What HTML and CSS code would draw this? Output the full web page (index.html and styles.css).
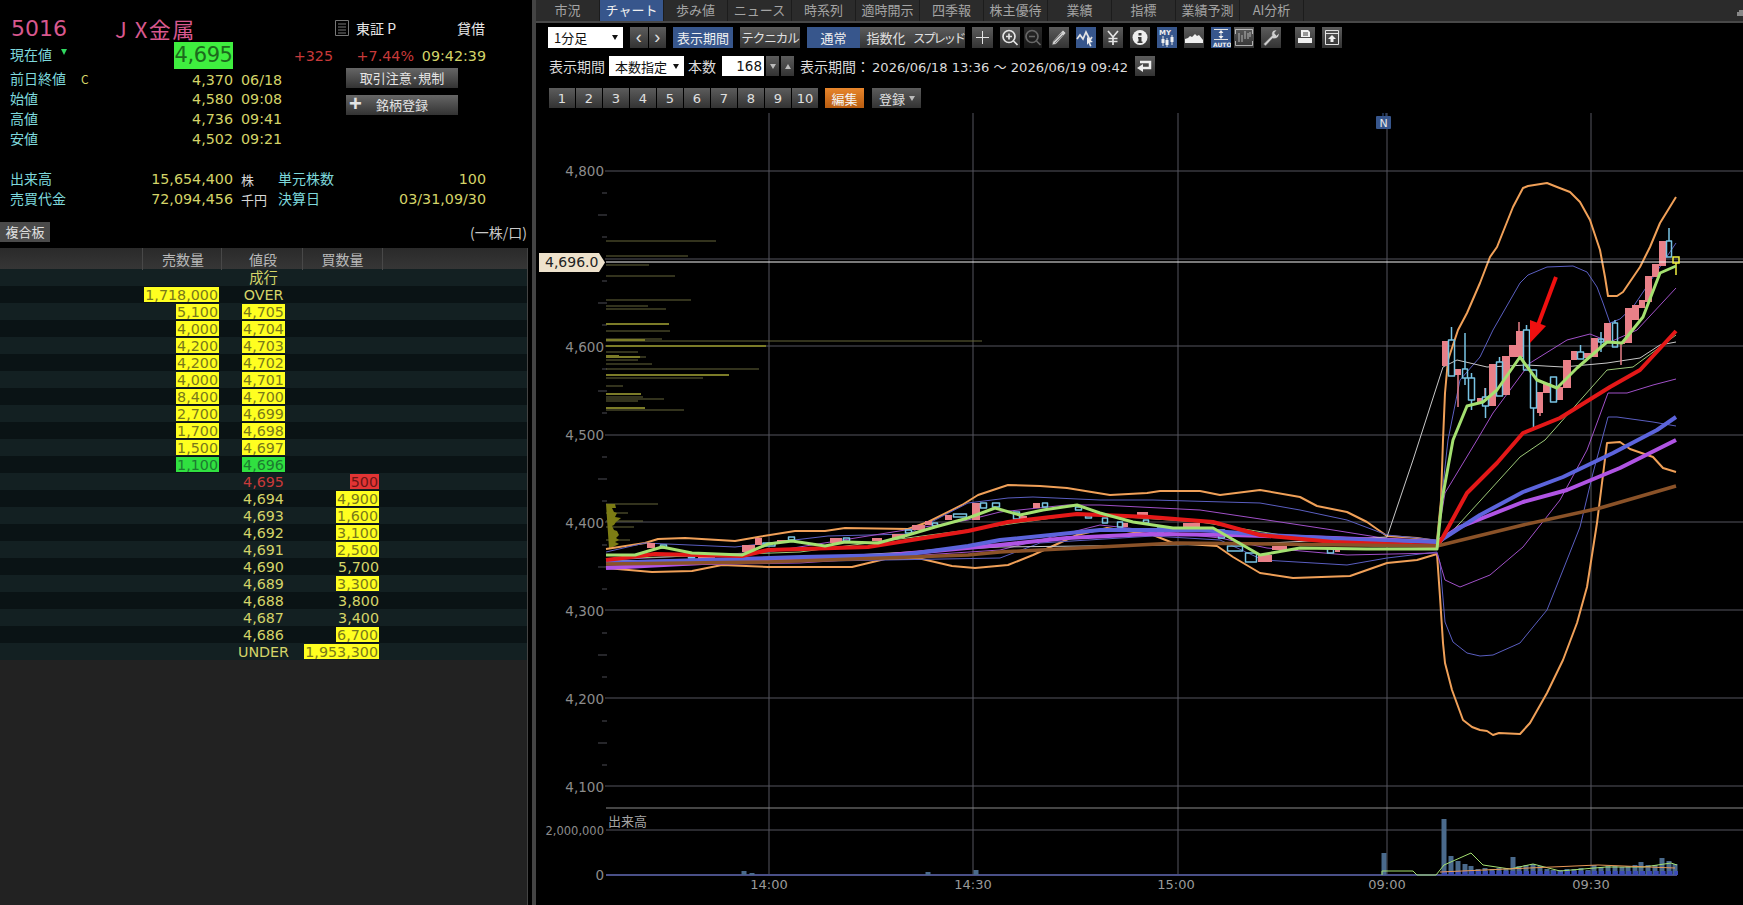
FILE: index.html
```html
<!DOCTYPE html>
<html lang="ja">
<head>
    <meta charset="UTF-8">
    <title>5016 JX金属 チャート</title>
    <link rel="stylesheet" href="styles.css">
</head>
<body>
<div class="left">
    <div class="title-row">
        <span class="code">5016</span>
        <span class="name">J X金属</span>
        <svg class="memo" viewBox="0 0 14 16"><path d="M.5.5h13v15H.5zM3 4h8M3 7h8M3 10h8M3 13h8"/></svg>
        <span class="market">東証 P</span>
        <span class="margin">貸借</span>
    </div>
    <div class="now-row">
        <span class="label">現在値<i class="tri"></i></span>
        <span class="num"><b class="now">4,695</b></span>
        <span class="num red">+325</span>
        <span class="num red">+7.44%</span>
        <span class="num">09:42:39</span>
    </div>
    <div class="stats">
        <div class="stat-list">
            <div class="stat-row"><span class="label">前日終値<em class="mark">C</em></span><span class="num">4,370</span><span class="val">06/18</span></div>
            <div class="stat-row"><span class="label">始値</span><span class="num">4,580</span><span class="val">09:08</span></div>
            <div class="stat-row"><span class="label">高値</span><span class="num">4,736</span><span class="val">09:41</span></div>
            <div class="stat-row"><span class="label">安値</span><span class="num">4,502</span><span class="val">09:21</span></div>
        </div>
        <div class="stat-btns">
            <div class="btn-wide">取引注意･規制</div>
            <div class="btn-wide btn-add"><span class="plus">+</span><span>銘柄登録</span></div>
        </div>
    </div>
    <div class="info-list">
        <div class="info-row"><span class="label">出来高</span><span class="num">15,654,400</span><span class="unit">株</span><span class="label">単元株数</span><span class="num">100</span></div>
        <div class="info-row"><span class="label">売買代金</span><span class="num">72,094,456</span><span class="unit">千円</span><span class="label">決算日</span><span class="num">03/31,09/30</span></div>
    </div>
    <div class="board-bar">
        <div class="board-btn">複合板</div>
        <span class="board-unit">(一株/口)</span>
    </div>
    <div class="board">
        <div class="cols head"><span></span><span>売数量</span><span>値段</span><span>買数量</span></div>
        <div class="cols r"><span></span><span></span><span class="p">成行</span><span></span></div>
        <div class="cols r"><span></span><span class="q"><b class="y">1,718,000</b></span><span class="p">OVER</span><span></span></div>
        <div class="cols r"><span></span><span class="q"><b class="y">5,100</b></span><span class="p"><b class="y">4,705</b></span><span></span></div>
        <div class="cols r"><span></span><span class="q"><b class="y">4,000</b></span><span class="p"><b class="y">4,704</b></span><span></span></div>
        <div class="cols r"><span></span><span class="q"><b class="y">4,200</b></span><span class="p"><b class="y">4,703</b></span><span></span></div>
        <div class="cols r"><span></span><span class="q"><b class="y">4,200</b></span><span class="p"><b class="y">4,702</b></span><span></span></div>
        <div class="cols r"><span></span><span class="q"><b class="y">4,000</b></span><span class="p"><b class="y">4,701</b></span><span></span></div>
        <div class="cols r"><span></span><span class="q"><b class="y">8,400</b></span><span class="p"><b class="y">4,700</b></span><span></span></div>
        <div class="cols r"><span></span><span class="q"><b class="y">2,700</b></span><span class="p"><b class="y">4,699</b></span><span></span></div>
        <div class="cols r"><span></span><span class="q"><b class="y">1,700</b></span><span class="p"><b class="y">4,698</b></span><span></span></div>
        <div class="cols r"><span></span><span class="q"><b class="y">1,500</b></span><span class="p"><b class="y">4,697</b></span><span></span></div>
        <div class="cols r"><span></span><span class="q"><b class="g">1,100</b></span><span class="p"><b class="g">4,696</b></span><span></span></div>
        <div class="cols r"><span></span><span></span><span class="p red">4,695</span><span class="q"><b class="rd">500</b></span></div>
        <div class="cols r"><span></span><span></span><span class="p">4,694</span><span class="q"><b class="y">4,900</b></span></div>
        <div class="cols r"><span></span><span></span><span class="p">4,693</span><span class="q"><b class="y">1,600</b></span></div>
        <div class="cols r"><span></span><span></span><span class="p">4,692</span><span class="q"><b class="y">3,100</b></span></div>
        <div class="cols r"><span></span><span></span><span class="p">4,691</span><span class="q"><b class="y">2,500</b></span></div>
        <div class="cols r"><span></span><span></span><span class="p">4,690</span><span class="q">5,700</span></div>
        <div class="cols r"><span></span><span></span><span class="p">4,689</span><span class="q"><b class="y">3,300</b></span></div>
        <div class="cols r"><span></span><span></span><span class="p">4,688</span><span class="q">3,800</span></div>
        <div class="cols r"><span></span><span></span><span class="p">4,687</span><span class="q">3,400</span></div>
        <div class="cols r"><span></span><span></span><span class="p">4,686</span><span class="q"><b class="y">6,700</b></span></div>
        <div class="cols r"><span></span><span></span><span class="p">UNDER</span><span class="q"><b class="y">1,953,300</b></span></div>
    </div>
</div>

<div class="divider"></div>

<div class="right">
    <div class="tabs">
        <span class="tab">市況</span>
        <span class="tab active">チャート</span>
        <span class="tab">歩み値</span>
        <span class="tab">ニュース</span>
        <span class="tab">時系列</span>
        <span class="tab">適時開示</span>
        <span class="tab">四季報</span>
        <span class="tab">株主優待</span>
        <span class="tab">業績</span>
        <span class="tab">指標</span>
        <span class="tab">業績予測</span>
        <span class="tab">AI分析</span>
        <svg class="corner" viewBox="0 0 6 6"><path d="M0 6V2h2V0h4v6z"/></svg>
    </div>

    <div class="tool-row">
        <div class="select sel-period">1分足<i class="down"></i></div>
        <div class="nav"><span class="btn">‹</span><span class="btn">›</span></div>
        <div class="btn blue w60">表示期間</div>
        <div class="btn w60 kana">テクニカル</div>
        <div class="seg"><span class="btn blue">通常</span><span class="btn">指数化</span><span class="btn kana-tight">スプレッド</span></div>
        <div class="icon wide"><svg viewBox="0 0 21 21"><path class="ln" d="M10.500 4v13M4 10.500h13"/></svg></div>
        <div class="zoom-pair">
            <div class="icon"><svg viewBox="0 0 20 21"><circle class="ln2" cx="9" cy="9.500" r="6"/><path class="ln2" d="M6 9.500h6M9 6.500v6M13.500 14l4 4"/></svg></div>
            <div class="icon off"><svg viewBox="0 0 18 21"><circle class="ln2" cx="8" cy="9.500" r="6"/><path class="ln2" d="M5 9.500h6M12.500 14l4 4"/></svg></div>
        </div>
        <div class="icon"><svg viewBox="0 0 20 21"><path class="solid" d="M14 3l3 3L7 17l-4 1 1-4zM12.500 6.500l-8 8M14 8l-8 8"/></svg></div>
        <div class="icon on"><svg viewBox="0 0 20 21"><path class="ln2" d="M1 12l3-4 3 4 3-7 4 8 2-3"/><path class="fill" d="M11 10l6 5-3 .5 1.500 3.500-1.500.5-1.500-3.500-1.500 2z"/></svg></div>
        <div class="icon"><svg viewBox="0 0 20 21"><path class="ln2" d="M5 4l5 6 5-6M10 10v8M5.500 11.500h9M5.500 14.500h9"/></svg></div>
        <div class="icon"><svg viewBox="0 0 20 21"><circle class="fill" cx="10" cy="10.500" r="7.500"/><path class="dark" d="M8.500 6h3v2.500h-3zM8 10h3.500v4.500H12.500V16h-5v-1.500h1v-3H8z"/></svg></div>
        <div class="icon on"><svg viewBox="0 0 20 21"><text class="my" x="2" y="8">MY</text><path class="ln" d="M6 9v10M10 11v9M15 8v10"/><path class="fill" d="M4.500 12h3v4h-3zM8.500 13h3v5h-3zM13.500 10h3v5h-3z"/></svg></div>
        <div class="icon"><svg viewBox="0 0 20 21"><path class="fill" d="M1 16v-4l3-1 2-2 2 1 3-3 2 2 2-1 4 5v3z"/></svg></div>
        <div class="icon on"><svg viewBox="0 0 20 21"><path class="ln" d="M3 2.500h14M3 12.500h14M10 4v7"/><path class="fill" d="M10 3l2.500 3h-5zM10 12l2.500-3h-5z"/><text class="auto" x="2" y="20">AUTO</text></svg></div>
        <div class="icon tight"><svg viewBox="0 0 20 21"><path class="thin" d="M1.500 7V2.500h17V7M1.500 14v4.500h17V14M5 6v9M8 8v7M11 4v8M14 6v6M16 5v5"/></svg></div>
        <div class="icon"><svg viewBox="0 0 20 21"><path class="solid" d="M2.500 17l8.500-8.500C10 5 12 2.500 16 3l-2.500 3 2 2.500L18 6c.5 4-2.500 6.500-6.500 5.500L4.500 19z"/></svg></div>
        <div class="icon after-gap"><svg viewBox="0 0 20 21"><path class="fill" d="M6 3h7l2 2v5H6zM3 11h14v5H3z"/><path class="dark" d="M8 5.500h5v1H8zM8 7.500h5v1H8z"/></svg></div>
        <div class="icon"><svg viewBox="0 0 20 21"><path class="ln" d="M3.500 3.500h13v14h-13zM3.500 6.500h13"/><path class="fill" d="M10 8l4 4h-2.500v3h-3v-3H6z"/></svg></div>
    </div>

    <div class="period-row">
        <span class="txt">表示期間</span>
        <div class="select sel-count">本数指定<i class="down"></i></div>
        <span class="txt">本数</span>
        <div class="count">
            <span class="count-val">168</span>
            <span class="btn arrow"><i class="down gray"></i></span>
            <span class="btn arrow"><i class="up"></i></span>
        </div>
        <span class="txt label-range">表示期間：</span>
        <span class="range">2026/06/18 13:36 ～ 2026/06/19 09:42</span>
        <div class="btn back"><svg viewBox="0 0 20 20"><path class="back-ln" d="M5 6h10v6H7"/><path class="fill" d="M8 8v8l-6-4z"/></svg></div>
    </div>

    <div class="num-row">
        <span class="btn n">1</span><span class="btn n">2</span><span class="btn n">3</span><span class="btn n">4</span><span class="btn n">5</span>
        <span class="btn n">6</span><span class="btn n">7</span><span class="btn n">8</span><span class="btn n">9</span><span class="btn n">10</span>
        <span class="btn edit">編集</span>
        <span class="btn reg">登録<i class="down gray"></i></span>
    </div>

    <svg class="chart" viewBox="536 113 1207 792">
        <!-- grid -->
        <path class="grid" d="M605 171H1743M605 259H1743M605 346H1743M605 435H1743M605 522H1743M605 610H1743M605 698H1743M605 786H1743M606 830H1743"/>
        <path class="grid" d="M769 113V875M973 113V875M1178 113V875M1387 113V875M1591 113V875"/>
        <path class="sep" d="M606 808H1743"/>
        <path class="tick" d="M602 193h5M598 215h9M602 237h5M602 281h5M598 303h9M602 325h5M602 369h5M598 391h9M602 413h5M602 457h5M598 479h9M602 501h5M602 545h5M598 567h9M602 589h5M602 633h5M598 655h9M602 677h5M602 721h5M598 743h9M602 765h5"/>

        <!-- price volume on the left edge -->
        <path class="pv" d="M606 241H716M606 256H688M606 265H649M606 276H675M606 300H691M606 306H648M606 309H666M606 331H670M606 339H662M606 341H982M606 352H638M606 360H638M606 364H652M606 369H759M606 378H703M606 386H623M606 397H643M606 399H664M606 401H638M606 410H684M606 357H646M606 504H658M606 513H628M606 521H643M606 527H634M606 540H630"/>
        <path class="pv2" d="M606 324H669M606 340H645M606 346H766M606 356H619M606 357H640M606 375H729M606 394H641M606 408H645"/>
        <path class="pv-solid" d="M606 504h9l1 4h-4l2 4 3 1-2 4 6 1-5 4-2 3-2 1 2 4 3 1 2 4-3 3 3 2-4 2 4 2-6 3-4 1z"/>

        <!-- bands -->
        <path class="band-o" d="M606 549L645 543 658 539 685 538 735 541 758 537 795 531 825 531 845 528 908 529 928 522 962 505 978 495 1008 485 1040 486 1067 488 1110 495 1147 493 1160 491 1200 491 1220 495 1260 490 1300 497 1317 506 1347 512 1367 522 1387 536 1417 538 1437 541 1441 500 1443 440 1445 393 1448 360 1458 330 1467 313 1480 283 1490 257 1497 247 1513 207 1523 188 1528 186 1547 183 1557 187 1570 192 1580 202 1590 220 1600 250 1605 277 1608 296 1617 296 1623 292 1640 267 1650 247 1660 223 1676 197"/>
        <path class="band-o" d="M606 568L652 572 692 571 722 565 768 567 852 567 885 559 922 559 952 566 975 568 1008 565 1033 555 1077 535 1107 528 1153 535 1173 543 1217 546 1233 557 1260 573 1293 578 1350 576 1387 563 1417 560 1437 554 1440 597 1443 643 1445 663 1452 690 1463 720 1472 727 1480 730 1487 731 1493 735 1499 733 1520 734 1530 723 1547 693 1563 660 1577 623 1587 587 1597 523 1602 483 1607 443 1620 442 1630 449 1653 457 1663 468 1676 472"/>
        <path class="band-b" d="M606 552L645 543 735 547 828 536 908 534 968 503 1008 498 1033 497 1100 500 1153 500 1260 503 1300 510 1347 520 1387 535 1437 540 1448 440 1460 380 1480 357 1493 330 1520 283 1528 275 1547 267 1573 266 1587 272 1597 287 1603 303 1610 323 1620 319 1633 307 1676 243"/>
        <path class="band-b" d="M606 567L715 563 1000 558 1040 543 1153 536 1220 540 1263 560 1347 565 1387 558 1437 552 1440 563 1445 622 1453 642 1467 653 1480 656 1493 655 1520 643 1533 627 1547 610 1563 570 1580 527 1593 473 1600 447 1608 417 1617 417 1653 422 1676 426"/>
        <path class="band-p" d="M606 560L768 552 968 520 1000 512 1067 505 1100 505 1200 510 1267 520 1333 530 1383 538 1437 541 1445 493 1477 440 1493 413 1530 363 1567 340 1590 334 1610 342 1637 330 1676 288"/>
        <path class="band-p" d="M606 566L800 563 1000 550 1100 525 1220 538 1267 548 1347 555 1437 553 1445 580 1460 587 1490 575 1523 547 1560 500 1587 450 1608 393 1627 393 1653 385 1676 379"/>
        <path class="ma-w" d="M606 561L800 558 1000 547 1250 544 1387 537 1413 460 1443 367 1457 360 1487 367 1527 365 1563 367 1607 363 1640 358 1660 345 1676 342"/>
        <path class="ma-g" d="M606 559L800 552 968 530 1080 514 1200 522 1300 538 1437 547 1460 523 1520 457 1545 440 1607 370 1633 367 1660 347 1676 335"/>

        <!-- candles -->
        <path class="wick-r" d="M1458 373V407M1485 398V388M1519 331V322M1540 413V416M1621 344V365"/>
        <path class="candle-r" d="M1442 341h6v25h-6zM1455 369h6v6h-6zM1477 398h5v4h-5zM1489 364h7v42h-7zM1502 356h8v39h-8zM1509 345h8v12h-8zM1516 331h7v26h-7zM1537 392h6v21h-6zM1543 383h7v10h-7zM1557 387h6v13h-6zM1563 360h8v28h-8zM1571 351h6v9h-6zM1584 353h7v5h-7zM1591 338h7v19h-7zM1604 323h7v19h-7zM1618 342h7v2h-7zM1625 308h7v35h-7zM1632 305h7v15h-7zM1639 300h6v8h-6zM1645 276h7v26h-7zM1652 264h7v13h-7zM1659 241h7v25h-7z"/>
        <path class="candle-r" d="M647 543h8v5h-8zM742 545h13v7h-13zM755 538h7v7h-7zM777 540h11v3h-11zM830 538h12v5h-12zM872 538h10v3h-10zM892 534h13v4h-13zM912 525h13v5h-13zM925 521h7v4h-7zM945 515h7v5h-7zM972 503h8v17h-8zM1020 516h7v3h-7zM1033 503h7v5h-7zM698 557h17v3h-17zM722 553h6v2h-6zM1122 523h6v4h-6zM1137 512h11v3h-11zM1183 523h17v4h-17zM1258 555h14v7h-14zM1272 546h15v4h-15zM1335 548h5v4h-5z"/>
        <path class="candle-b" d="M1448.500 340h6v36h-6zM1451.500 327v13M1462.500 369h5v9h-5zM1465 333v36M1465 378v7M1468.500 378h6v22h-6zM1471.500 373v5M1471.500 400v10M1482.500 397h6v9h-6zM1485.500 388v9M1485.500 406v12M1496.500 362h6v34h-6zM1499.500 357v5M1523.500 330h6v40h-6zM1526.500 325v5M1530.500 370h6v38h-6zM1533.500 408v22M1550.500 377h6v25h-6zM1577.500 352h6v7h-6zM1580.500 345v7M1598.500 339h5v3h-5zM1601 332v20M1612.500 323h5v24h-5zM1615 320v3M1666.500 241h5v16h-5zM1669 228v13"/>
        <path class="candle-b" d="M660.500 545h6v3h-6zM763 543h12v3h-12zM788.500 537h6v3h-6zM843.500 538h6v3h-6zM905.500 530h6v3h-6zM932.500 523h5v3h-5zM953.500 514h13v3h-13zM980.500 503h6v5h-6zM992.500 503h7v4h-7zM1013.500 512h6v7h-6zM688.500 557h6v1h-6zM1042.500 503h5v4h-5zM1075.500 507h6v3h-6zM1085.500 516h6v2h-6zM1102.500 518h5v5h-5zM1117.500 522h5v5h-5zM1143.500 520h5v3h-5zM1157.500 528h6v4h-6zM1218.500 530h6v8h-6zM1227.500 546h15v5h-15zM1245.500 553h11v9h-11zM1327.500 548h6v5h-6z"/>
        <path class="last-wick" d="M1676 263v12"/>

        <!-- moving averages -->
        <path class="ma-purple" d="M606 568L702 563 868 557 1000 545 1067 538 1150 534 1233 535 1333 538 1437 542 1460 527 1523 502 1567 490 1620 468 1676 440"/>
        <path class="ma-blue" d="M606 563L702 560 802 557 902 555 968 546 1000 540 1100 530 1200 530 1267 535 1367 540 1438 542 1480 515 1523 492 1563 477 1613 453 1657 430 1676 417"/>
        <path class="ma-red" d="M606 560L655 554 742 556 768 550 868 547 968 531 1008 522 1077 514 1150 517 1213 522 1260 535 1333 542 1437 546 1443 537 1467 493 1497 463 1523 433 1560 418 1610 387 1640 370 1676 331"/>
        <path class="ma-brown" d="M606 564L768 562 968 555 1000 552 1177 543 1437 546 1523 525 1600 508 1676 486"/>
        <path class="ma-lime" d="M606 555L635 555 662 547 692 553 742 555 768 544 792 541 825 546 845 542 878 543 908 535 935 527 968 518 995 508 1020 515 1043 510 1077 505 1100 513 1133 522 1173 528 1213 528 1260 555 1300 548 1367 549 1437 549 1442 500 1453 440 1467 406 1483 402 1497 390 1520 357 1537 380 1557 388 1577 368 1607 342 1622 343 1643 317 1660 273 1676 266"/>

        <!-- current price -->
        <path class="cur" d="M606 262H1743"/>
        <rect class="last" x="1673" y="257" width="6" height="6"/>
        <polygon class="tag" points="539,253 599,253 605,262.500 599,272 539,272"/>
        <text class="tag-txt" x="545" y="267">4,696.0</text>

        <!-- arrow -->
        <path class="arrow-shaft" d="M1556 277L1538 325"/>
        <polygon class="arrow-head" points="1530,343 1530,320 1546,326"/>

        <!-- news -->
        <path class="news-pin" d="M1383 113v4M1386 113v4"/>
        <rect class="news" x="1376" y="116" width="15" height="13" rx="1"/>
        <text class="news-txt" x="1383.500" y="127">N</text>

        <!-- axis -->
        <text class="axis" x="604" y="176">4,800</text>
        <text class="axis" x="604" y="352">4,600</text>
        <text class="axis" x="604" y="440">4,500</text>
        <text class="axis" x="604" y="528">4,400</text>
        <text class="axis" x="604" y="616">4,300</text>
        <text class="axis" x="604" y="704">4,200</text>
        <text class="axis" x="604" y="792">4,100</text>
        <text class="axis small" x="604" y="835">2,000,000</text>
        <text class="axis" x="604" y="880">0</text>
        <text class="vol-label" x="608" y="826">出来高</text>
        <text class="time" x="769" y="889">14:00</text>
        <text class="time" x="973" y="889">14:30</text>
        <text class="time" x="1176" y="889">15:00</text>
        <text class="time" x="1387" y="889">09:00</text>
        <text class="time" x="1591" y="889">09:30</text>

        <!-- volume -->
        <path class="vol-base" d="M606 875H1677"/>
        <path class="vol" d="M744 875V871M752 875V873M928 875V872M976 875V870M1384 875V853M1444 875V819M1451 875V856M1458 875V861M1465 875V864M1471 875V866M1478 875V869M1485 875V868M1492 875V869M1499 875V868M1506 875V868M1513 875V857M1519 875V866M1526 875V865M1533 875V864M1540 875V866M1547 875V869M1553 875V870M1560 875V870M1567 875V869M1574 875V869M1581 875V868M1588 875V870M1594 875V865M1601 875V867M1608 875V866M1615 875V866M1622 875V867M1628 875V866M1635 875V865M1641 875V862M1648 875V865M1655 875V865M1662 875V858M1669 875V861M1675 875V864"/>
        <path class="vol-ma" d="M1442 873H1678"/>
        <path class="vol-g" d="M1382 875V871H1413L1417 875H1436L1444 865 1471 853 1483 865 1510 869 1533 864 1560 871 1606 867 1644 867 1671 863 1677 865"/>
        <path class="vol-o" d="M1440 872L1506 869 1598 865 1675 868"/>
    </svg>
</div>
</body>
</html>
```

FILE: styles.css
```css
* {
    box-sizing: border-box;
}
html, body {
    margin: 0;
    height: 100%;
}
body {
    display: flex;
    width: 1743px;
    height: 905px;
    overflow: hidden;
    background: #000;
    font-family: "DejaVu Sans", "Noto Sans CJK JP", sans-serif;
    font-size: 14.300px;
    color: #d4d468;
}
b, i, em {
    font-weight: normal;
    font-style: normal;
}

/* left panel */
.left {
    width: 532px;
    padding-top: 15px;
    flex: none;
}
.divider {
    width: 4px;
    flex: none;
    background: #444;
}
.label {
    margin-bottom: 2px;
    color: #7ed8dc;
    font-family: "Noto Sans CJK JP", sans-serif;
    font-size: 14px;
    line-height: 18px;
    white-space: nowrap;
}
.num {
    text-align: right;
    white-space: nowrap;
}
.red {
    color: #c83a3a;
}
.title-row {
    display: flex;
    align-items: center;
    height: 26px;
    padding-left: 11px;
    color: #d8588e;
    font-size: 22px;
}
.code {
    width: 104px;
}
.name {
    width: 220px;
    font-family: "Noto Sans CJK JP", sans-serif;
    font-size: 22px;
    letter-spacing: 1.500px;
    white-space: pre;
}
.memo {
    width: 14px;
    height: 16px;
    fill: none;
    stroke: #777;
}
.market {
    margin-left: 7px;
    width: 101px;
    color: #e8e8e8;
    font: 14px "Noto Sans CJK JP", sans-serif;
}
.margin {
    color: #e8e8e8;
    font: 14px "Noto Sans CJK JP", sans-serif;
}
.now-row {
    display: grid;
    grid-template-columns: 70px 153px 100px 81px 72px;
    align-items: center;
    height: 27px;
    margin-top: 1px;
    padding-left: 10px;
}
.now-row .label {
    margin-bottom: 3px;
}
.now {
    display: inline-block;
    width: 59px;
    height: 27px;
    background: #3fee3f;
    color: #1c6a1c;
    font-size: 21px;
    line-height: 27px;
    text-align: center;
    letter-spacing: -.4px;
}
.tri {
    display: inline-block;
    margin: 0 0 8px 9px;
    border-top: 6px solid #30d860;
    border-left: 3.500px solid transparent;
    border-right: 3.500px solid transparent;
    vertical-align: middle;
}
.stats {
    display: flex;
}
.stat-list {
    width: 346px;
}
.stat-row {
    display: grid;
    grid-template-columns: 70px 153px auto;
    align-items: center;
    height: 20px;
    padding-left: 10px;
}
.stat-row .val {
    margin-left: 8px;
}
.mark {
    margin-left: 15px;
    color: #d4d468;
    font-size: 12px;
}
.stat-btns {
    display: flex;
    flex-direction: column;
    gap: 7px;
    margin-top: -1px;
}
.btn-wide {
    display: flex;
    align-items: center;
    justify-content: center;
    width: 112px;
    height: 20px;
    padding-bottom: 2px;
    background: linear-gradient(#666, #333);
    color: #e4e4e4;
    font: 13px "Noto Sans CJK JP", sans-serif;
}
.btn-add {
    position: relative;
}
.plus {
    position: absolute;
    left: 3px;
    top: -4px;
    font: bold 22px "Liberation Sans", sans-serif;
}
.info-list {
    margin-top: 20px;
}
.info-row {
    display: grid;
    grid-template-columns: 70px 153px 45px 75px 133px;
    align-items: center;
    height: 20px;
    padding-left: 10px;
}
.unit {
    margin-left: 8px;
    color: #d8d8d8;
    font-family: "Noto Sans CJK JP", sans-serif;
    font-size: 13px;
    white-space: nowrap;
}
.board-bar {
    display: flex;
    align-items: center;
    justify-content: space-between;
    height: 20px;
    margin-top: 13px;
}
.board-btn {
    width: 50px;
    height: 20px;
    background: #4a4a4a;
    color: #e0e0e0;
    font: 13px/19px "Noto Sans CJK JP", sans-serif;
    text-align: center;
}
.board-unit {
    margin-right: 5px;
    color: #c8c8c8;
    font: 14px "Noto Sans CJK JP", sans-serif;
}
.board {
    width: 528px;
    height: 657px;
    margin-top: 6px;
    background: #222;
    border-right: 1px solid #444;
}
.cols {
    display: grid;
    grid-template-columns: 143px 79px 81px 80px 1fr;
}
.head {
    height: 21px;
    background: linear-gradient(#2a2a2a, #363636);
    color: #b8b8b8;
    font: 14px/22px "Noto Sans CJK JP", sans-serif;
    text-align: center;
}
.head span {
    border-right: 1px solid #484848;
}
.head span:nth-child(2), .head span:nth-child(3) {
    padding-left: 2px;
}
.r {
    height: 17px;
    line-height: 19px;
    background: #0a1315;
    white-space: nowrap;
}
.r:nth-child(even) {
    background: #132022;
}
.p {
    padding-left: 2px;
    text-align: center;
}
.q {
    padding-right: 4px;
    text-align: right;
}
.r .q:nth-child(2) {
    padding-right: 3px;
}
.y, .g, .rd {
    display: inline-block;
    height: 15px;
    padding: 0 1px;
    line-height: 16px;
}
.y {
    background: #ffff20;
    color: #78781a;
}
.g {
    background: #30e040;
    color: #1c7a30;
}
.rd {
    background: #e23434;
    color: #6a1414;
}

/* right panel */
.right {
    flex: 1;
    min-width: 0;
    display: flex;
    flex-direction: column;
    font-family: "Noto Sans CJK JP", sans-serif;
}
.tabs {
    display: flex;
    position: relative;
    height: 23px;
    flex: none;
    background: #2b2b2b;
    border-bottom: 2px solid #484848;
}
.tab {
    width: 64px;
    text-align: center;
    color: #a4a4a4;
    font-size: 13px;
    line-height: 20px;
    background: #2b2b2b;
    border-right: 1px solid #1c1c1c;
}
.tab.active {
    background: #37568c;
    color: #f0f0f0;
}
.corner {
    position: absolute;
    right: 0;
    top: 10px;
    width: 6px;
    height: 6px;
    fill: #888;
}
.btn {
    display: flex;
    align-items: center;
    justify-content: center;
    height: 100%;
    background: linear-gradient(#5c5c5c, #333);
    color: #e0e0e0;
    font-size: 13px;
    white-space: nowrap;
}
.btn.blue {
    background: #37568c;
    color: #f0f0f0;
}
.w60 {
    width: 60px;
    flex: none;
}
.kana {
    font-size: 12.500px;
    letter-spacing: -1px;
}
.kana-tight {
    font-size: 12.500px;
    letter-spacing: -2.300px;
}
.tool-row {
    display: flex;
    gap: 7px;
    height: 21px;
    flex: none;
    margin-top: 4px;
    padding-left: 12px;
}
.select {
    position: relative;
    display: flex;
    align-items: center;
    background: #fff;
    color: #111;
    font-size: 13px;
    padding-left: 6px;
}
.sel-period {
    width: 75px;
}
.sel-count {
    width: 75px;
    height: 20px;
}
.down {
    position: absolute;
    right: 5px;
    top: 8px;
    border-top: 5px solid #111;
    border-left: 3px solid transparent;
    border-right: 3px solid transparent;
}
.down.gray {
    border-top-color: #bbb;
}
.up {
    border-bottom: 5px solid #bbb;
    border-left: 3px solid transparent;
    border-right: 3px solid transparent;
}
.nav {
    display: flex;
    gap: 1px;
    width: 36px;
}
.nav .btn {
    flex: 1;
    font: 18px "Liberation Sans", sans-serif;
}
.seg {
    display: grid;
    grid-template-columns: 53px 52px 53px;
    width: 158px;
    overflow: hidden;
}
.icon {
    width: 20px;
    height: 21px;
    flex: none;
    background: linear-gradient(#5c5c5c, #333);
}
.icon svg {
    display: block;
    width: 100%;
    height: 100%;
}
.icon.wide {
    width: 21px;
}
.icon.on {
    background: #37568c;
}
.icon.off {
    width: 18px;
    opacity: .45;
}
.icon.tight {
    margin-left: -4px;
}
.icon.after-gap {
    margin-left: 7px;
}
.zoom-pair {
    display: flex;
    gap: 4px;
}
.ln, .ln2, .thin {
    fill: none;
    stroke: #e4e4e4;
}
.ln {
    stroke-width: 1;
}
.ln2 {
    stroke-width: 1.700;
}
.thin {
    stroke-width: .7;
}
.fill {
    fill: #f0f0f0;
}
.dark {
    fill: #3c3c3c;
}
.solid {
    fill: #cfcfcf;
    stroke: #4a4a4a;
    stroke-width: .6;
}
.my {
    fill: #f0f0f0;
    font: bold 7px "DejaVu Sans", sans-serif;
}
.auto {
    fill: #f0f0f0;
    font: bold 6px "DejaVu Sans", sans-serif;
}
.period-row {
    display: flex;
    align-items: center;
    gap: 4px;
    height: 20px;
    flex: none;
    margin-top: 8px;
    padding-left: 13px;
    color: #dcdcdc;
}
.txt {
    font-size: 14px;
    white-space: nowrap;
}
.count {
    display: flex;
    gap: 2px;
    height: 20px;
}
.count-val {
    width: 42px;
    margin-left: 2px;
    background: #fff;
    color: #111;
    font: 13.500px/20px "DejaVu Sans", sans-serif;
    text-align: right;
    padding-right: 2px;
}
.btn.arrow {
    position: relative;
    width: 13px;
}
.arrow .down {
    right: 3.500px;
}
.label-range {
    margin-left: 2px;
    width: 68px;
}
.range {
    font: 13.100px "DejaVu Sans", "Noto Sans CJK JP", sans-serif;
    white-space: nowrap;
}
.btn.back {
    width: 20px;
    margin-left: 3px;
}
.btn.back svg {
    width: 20px;
    height: 20px;
}
.back-ln {
    fill: none;
    stroke: #f0f0f0;
    stroke-width: 2.500;
}
.num-row {
    display: flex;
    gap: 1px;
    height: 20px;
    flex: none;
    margin-top: 12px;
    padding-left: 13px;
}
.btn.n {
    width: 26px;
    font: 13px "DejaVu Sans", sans-serif;
}
.btn.edit {
    width: 39px;
    margin-left: 6px;
    background: linear-gradient(#e8862c, #b85c10);
    color: #f4f4f4;
}
.btn.reg {
    position: relative;
    width: 49px;
    margin-left: 7px;
    padding-right: 9px;
}
.reg .down {
    right: 6px;
}

/* chart */
.chart {
    display: block;
    width: 1207px;
    height: 792px;
    margin-top: 5px;
    flex: none;
}
.chart path, .chart polyline {
    fill: none;
    stroke-linejoin: round;
}
.grid {
    stroke: #55555e;
    stroke-width: 1;
}
.sep {
    stroke: #8a8a8a;
}
.tick {
    stroke: #4c4c55;
}
.pv {
    stroke: #66663a;
}
.pv2 {
    stroke: #7c7c28;
    stroke-width: 2;
}
.chart .pv-solid {
    fill: #7c7c14;
}
.band-o {
    stroke: #f0a058;
    stroke-width: 2;
}
.band-b {
    stroke: #5a5ec0;
    stroke-width: 1;
}
.band-p {
    stroke: #a050c8;
    stroke-width: 1;
}
.ma-w {
    stroke: #c8c8c8;
    stroke-width: 1;
}
.ma-g {
    stroke: #9cc878;
    stroke-width: 1;
}
.chart .candle-r {
    fill: #e88088;
}
.wick-r {
    stroke: #e88088;
    stroke-width: 1.500;
}
.candle-b {
    stroke: #78c4e4;
    stroke-width: 1.500;
}
.ma-brown {
    stroke: #8a5228;
    stroke-width: 3.500;
}
.ma-purple {
    stroke: #b054e4;
    stroke-width: 4;
}
.ma-blue {
    stroke: #5c64dc;
    stroke-width: 4;
}
.ma-red {
    stroke: #e41818;
    stroke-width: 4;
}
.ma-lime {
    stroke: #a4e070;
    stroke-width: 3;
}
.cur {
    stroke: #f4f4f4;
    stroke-width: 1.200;
}
.last {
    fill: none;
    stroke: #f0f040;
    stroke-width: 1.500;
}
.last-wick {
    stroke: #f0f040;
    stroke-width: 1.500;
}
.tag {
    fill: #eee2cc;
}
.tag-txt {
    fill: #222;
    font: 14px "DejaVu Sans", sans-serif;
}
.arrow-shaft {
    stroke: #f01010;
    stroke-width: 4;
}
.arrow-head {
    fill: #f01010;
}
.news {
    fill: #37568c;
}
.news-pin {
    stroke: #37568c;
}
.news-txt {
    fill: #e8e8e8;
    font: 11px "DejaVu Sans", sans-serif;
    text-anchor: middle;
}
.axis {
    fill: #8c8c8c;
    font: 13.500px "DejaVu Sans", sans-serif;
    text-anchor: end;
}
.axis.small {
    font-size: 11.500px;
}
.vol-label {
    fill: #a4a4a4;
    font: 13px "Noto Sans CJK JP", sans-serif;
}
.time {
    fill: #9a9a9a;
    font: 13px "DejaVu Sans", sans-serif;
    text-anchor: middle;
}
.vol-base {
    stroke: #4a5088;
    stroke-width: 2;
}
.vol {
    stroke: #4a6a8c;
    stroke-width: 5;
}
.vol-ma {
    stroke: #3c4cb8;
    stroke-width: 4;
    stroke-dasharray: 5 1.830;
}
.vol-g {
    stroke: #a4e070;
    stroke-width: 1;
}
.vol-o {
    stroke: #e89858;
    stroke-width: 1;
}
```
